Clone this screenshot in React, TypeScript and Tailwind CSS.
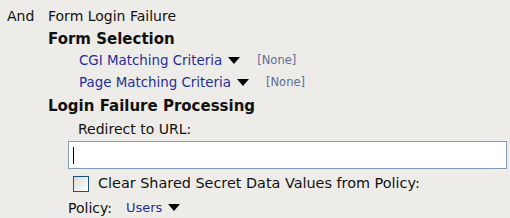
const font = { fontFamily: '"DejaVu Sans", Verdana, sans-serif' };

function Arrow() {
  return (
    <svg width="12" height="8" viewBox="0 0 12 8" className="inline-block ml-[6px]">
      <polygon points="0,0 12,0 6,7" fill="#000" />
    </svg>
  );
}

export default function App() {
  return (
    <div
      className="w-[510px] h-[218px] bg-[#eeece8] text-[#111] text-[14px] overflow-hidden pt-[7px]"
      style={font}
    >
      <div className="flex h-[18px] items-center">
        <span className="w-[48px] pl-[7px]">And</span>
        <span>Form Login Failure</span>
      </div>

      <div className="pl-[48px] mt-[4px] h-[20px] flex items-center font-bold text-[15px]">
        Form Selection
      </div>

      <div className="pl-[79px] mt-[2px] h-[20px] flex items-center text-[13.4px] text-[#1e2f9c]">
        <span>CGI Matching Criteria</span>
        <Arrow />
        <span className="ml-[17px] text-[11.5px] text-[#5b6d99]">[None]</span>
      </div>

      <div className="pl-[79px] mt-[2px] h-[20px] flex items-center text-[13.4px] text-[#1e2f9c]">
        <span>Page Matching Criteria</span>
        <Arrow />
        <span className="ml-[17px] text-[11.5px] text-[#5b6d99]">[None]</span>
      </div>

      <div className="pl-[48px] mt-[3px] h-[20px] flex items-center font-bold text-[15px]">
        Login Failure Processing
      </div>

      <div className="pl-[78px] mt-[3px] h-[20px] flex items-center">Redirect to URL:</div>

      <div className="pl-[68px] pr-[3px] mt-[2px]">
        <div className="h-[28px] bg-white border border-[#7f9db9] flex items-center pl-[4px]">
          <div className="w-[1px] h-[17px] bg-black" />
        </div>
      </div>

      <div className="pl-[73px] mt-[6px] h-[18px] flex items-center">
        <span className="w-[16px] h-[16px] border border-[#1c5180] bg-gradient-to-br from-[#dcdcd6] to-white" />
        <span className="ml-[9px] text-[14.4px]">Clear Shared Secret Data Values from Policy:</span>
      </div>

      <div className="pl-[68px] mt-[6px] h-[18px] flex items-center">
        <span>Policy:</span>
        <span className="ml-[14px] text-[13px] text-[#1e2f9c]">Users</span>
        <Arrow />
      </div>
    </div>
  );
}
